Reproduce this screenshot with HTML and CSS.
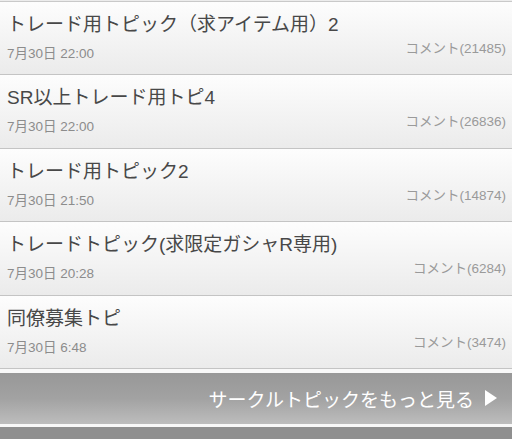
FILE: index.html
```html
<!DOCTYPE html>
<html lang="ja">
  <head>
    <meta charset="UTF-8" />
    <meta name="viewport" content="width=device-width, initial-scale=1.0" />
    <title>サークルトピック</title>
    <link rel="stylesheet" href="styles.css">
  </head>
  <body>
    <ul class="topic-list">
      <li class="topic">
        <div class="topic-title">トレード用トピック（求アイテム用）2</div>
        <div class="topic-meta">
          <span class="topic-date">7月30日 22:00</span>
          <span class="topic-comments">コメント(21485)</span>
        </div>
      </li>
      <li class="topic">
        <div class="topic-title">SR以上トレード用トピ4</div>
        <div class="topic-meta">
          <span class="topic-date">7月30日 22:00</span>
          <span class="topic-comments">コメント(26836)</span>
        </div>
      </li>
      <li class="topic">
        <div class="topic-title">トレード用トピック2</div>
        <div class="topic-meta">
          <span class="topic-date">7月30日 21:50</span>
          <span class="topic-comments">コメント(14874)</span>
        </div>
      </li>
      <li class="topic">
        <div class="topic-title">トレードトピック(求限定ガシャR専用)</div>
        <div class="topic-meta">
          <span class="topic-date">7月30日 20:28</span>
          <span class="topic-comments">コメント(6284)</span>
        </div>
      </li>
      <li class="topic">
        <div class="topic-title">同僚募集トピ</div>
        <div class="topic-meta">
          <span class="topic-date">7月30日 6:48</span>
          <span class="topic-comments">コメント(3474)</span>
        </div>
      </li>
    </ul>

    <div class="more">
      <a class="btn-more" href="#">サークルトピックをもっと見る <span class="arrow"></span></a>
    </div>
    <div class="next-bar"></div>
  </body>
</html>
```

FILE: styles.css
```css
body {
  margin: 0;
  background-color: #ececec;
  font-family: "Liberation Sans", "Noto Sans CJK JP", sans-serif;
}

/* Topic list */
.topic-list {
  list-style: none;
  margin: 1px 0 0;
  padding: 0;
  border-top: 1px solid #c9c9c9;
}

.topic {
  box-sizing: border-box;
  height: 73.4px;
  padding: 11px 6px 0 7px;
  border-bottom: 1px solid #c4c4c4;
  background: linear-gradient(#fdfdfd, #ebebeb);
}

.topic-title {
  font-size: 19px;
  line-height: 24px;
  color: #484848;
  white-space: nowrap;
}

.topic-meta {
  display: flex;
  justify-content: space-between;
  align-items: flex-start;
}

.topic-date {
  margin-top: 9px;
  font-size: 13.5px;
  line-height: 16px;
  color: #8c8c8c;
}

.topic-comments {
  margin-top: 4px;
  font-size: 13.5px;
  line-height: 16px;
  color: #9a9a9a;
}

/* More button */
.more {
  padding: 4px 0 3px;
  background-color: #f8f8f8;
}

.btn-more {
  display: flex;
  align-items: center;
  justify-content: flex-end;
  height: 51px;
  padding-right: 15px;
  background: linear-gradient(#989898, #a2a2a2 50%, #bdbdbd);
  color: #ffffff;
  font-size: 19px;
  text-decoration: none;
}

.btn-more .arrow {
  width: 0;
  height: 0;
  margin-left: 11px;
  border-top: 8px solid transparent;
  border-bottom: 8px solid transparent;
  border-left: 12px solid #ffffff;
}

.next-bar {
  height: 12px;
  background-color: #8f8f8f;
}
```
